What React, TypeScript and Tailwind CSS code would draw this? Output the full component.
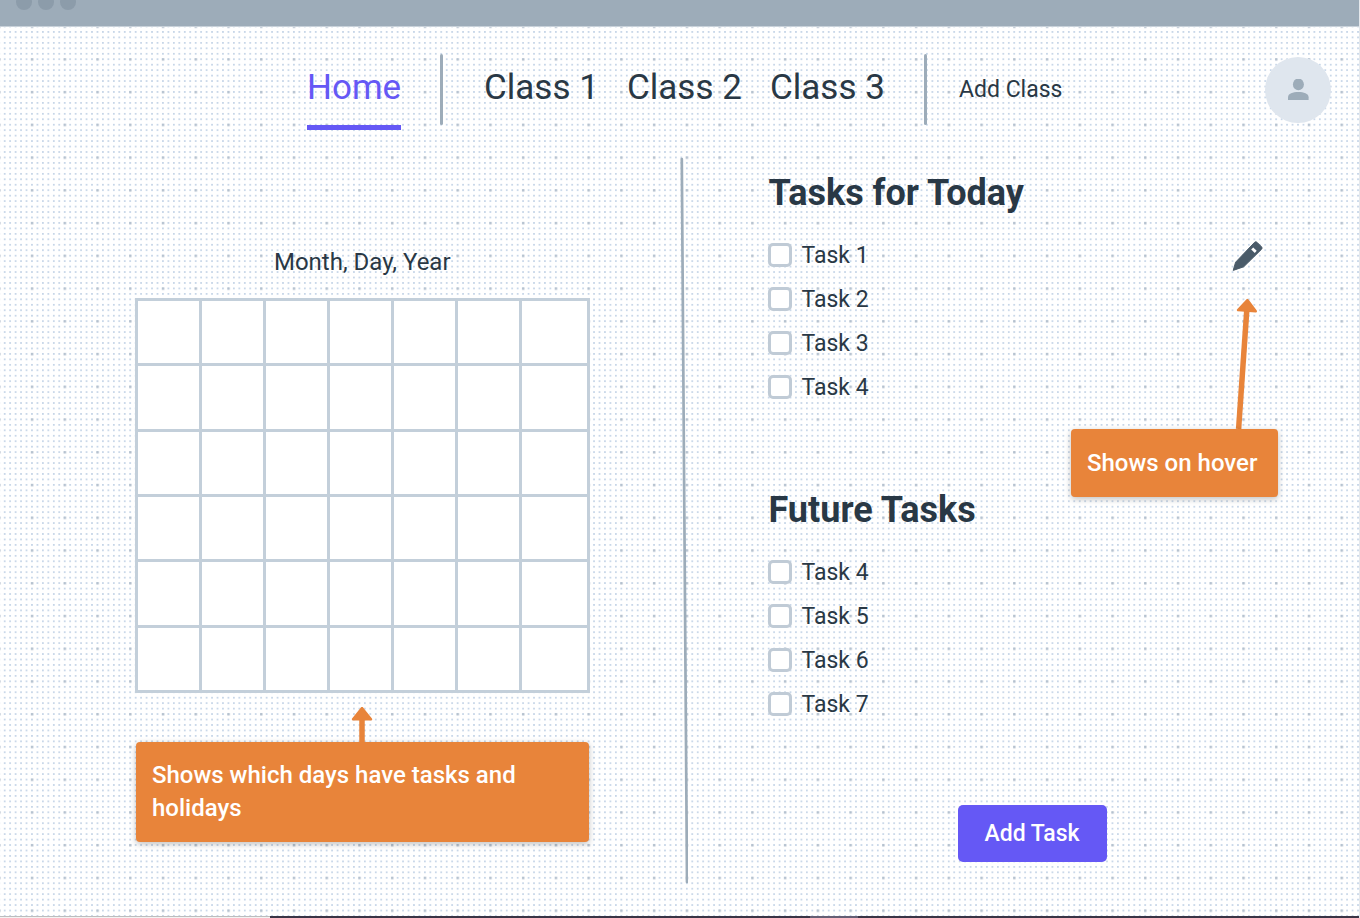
import React from "react";

const WEEKS = [0, 1, 2, 3, 4, 5];
const DAYS = [0, 1, 2, 3, 4, 5, 6];

function DottedBackdrop() {
  return (
    <svg className="absolute inset-0 -z-10 h-full w-full" aria-hidden="true">
      <defs>
        <pattern id="small-dots" x="1.98" y="1.95" width="5.457" height="5.457" patternUnits="userSpaceOnUse">
          <rect x="1.9" y="1.9" width="1.6" height="1.6" fill="#bacde3" />
        </pattern>
        <pattern id="large-dots" x="15.9" y="10.5" width="32.742" height="32.742" patternUnits="userSpaceOnUse">
          <rect x="15" y="15" width="2.4" height="2.4" fill="#b4c0cd" />
        </pattern>
      </defs>
      <rect width="100%" height="100%" fill="url(#small-dots)" />
      <rect width="100%" height="100%" fill="url(#large-dots)" />
    </svg>
  );
}

function ClassLink({ name }: { name: string }) {
  return (
    <a href="#class" className="w-28 text-[35px] leading-10 whitespace-nowrap">
      {name}
    </a>
  );
}

function TaskGroup({ title, tasks }: { title: string; tasks: string[] }) {
  return (
    <section>
      <h2 className="pl-px text-4xl leading-10 font-bold whitespace-nowrap">{title}</h2>
      <ul className="mt-[30px] flex flex-col gap-5">
        {tasks.map((task) => (
          <li key={task}>
            <label className="flex h-6 items-center gap-[10px] text-[23px] leading-6">
              <input
                type="checkbox"
                className="h-6 w-6 appearance-none rounded-[5px] border-3 border-[#c0cbd6] bg-white checked:bg-[#6558f5]"
              />
              <span className="pt-[2px]">{task}</span>
            </label>
          </li>
        ))}
      </ul>
    </section>
  );
}

export default function App() {
  return (
    <div className="relative isolate flex min-h-screen flex-col overflow-hidden border-r border-[#e4e8ec] bg-white font-['Roboto',sans-serif] text-[#293845]">
      <DottedBackdrop />

      <div className="flex h-[26px] items-start gap-[6px] bg-[#9dacb9] pl-4 shadow-[0_1px_0_#c9d2da]">
        <span className="-mt-[6px] h-4 w-4 rounded-full bg-[#8c9caa]" />
        <span className="-mt-[6px] h-4 w-4 rounded-full bg-[#8c9caa]" />
        <span className="-mt-[6px] h-4 w-4 rounded-full bg-[#8c9caa]" />
      </div>

      <header className="flex items-start pt-7 pr-7 pl-[307px]">
        <nav className="flex items-start">
          <a
            href="#home"
            className="w-[94px] border-b-5 border-[#6558f5] pt-[14px] pb-[17px] text-center text-[35px] leading-10 text-[#6558f5]"
          >
            Home
          </a>
          <span className="ml-[39px] h-[71px] w-[3px] rounded-full bg-[#9dacb9]" />
          <div className="ml-[41px] flex gap-[31px] pt-[14px]">
            <ClassLink name="Class 1" />
            <ClassLink name="Class 2" />
            <ClassLink name="Class 3" />
          </div>
          <span className="ml-[42px] h-[71px] w-[3px] rounded-full bg-[#9dacb9]" />
          <button type="button" className="ml-8 pt-4 text-[23px] leading-10 whitespace-nowrap">
            Add Class
          </button>
        </nav>
        <button
          type="button"
          aria-label="Account"
          className="mt-[3px] ml-auto flex h-[66px] w-[66px] items-center justify-center rounded-full bg-[#dfe6ee]"
        >
          <svg width="22" height="22" viewBox="0 0 22 22" fill="#9dacb9" aria-hidden="true">
            <ellipse cx="11.4" cy="5.4" rx="5.5" ry="5.9" />
            <path d="M1 21v-2.7c0-3.9 4.9-5.3 10.3-5.3s10.3 1.4 10.3 5.3V21z" />
          </svg>
        </button>
      </header>

      <main className="mt-[27px] flex flex-1">
        <section className="w-1/2 pt-[85px] pr-[90px] pl-[135px]">
          <h1 className="text-center text-2xl leading-10">Month, Day, Year</h1>
          <table className="mt-4 h-[395px] w-full table-fixed border-collapse bg-white" aria-label="Calendar">
            <tbody>
              {WEEKS.map((week) => (
                <tr key={week}>
                  {DAYS.map((day) => (
                    <td key={day} className="w-16 border-3 border-[#c3cfda] last:w-auto" />
                  ))}
                </tr>
              ))}
            </tbody>
          </table>
          <svg className="mx-auto mt-[14px] block" width="22" height="35" viewBox="0 0 22 35" aria-hidden="true">
            <path d="M11 6v29" stroke="#e8843a" strokeWidth="5.5" />
            <path d="M11 1 20 12.2H2z" fill="#e8843a" stroke="#e8843a" strokeWidth="2.4" strokeLinejoin="round" />
          </svg>
          <p className="mx-px rounded-[4px] bg-[#e8843a] px-4 py-[17px] text-2xl leading-[33px] font-medium text-white shadow-[0_2px_6px_rgba(0,0,0,0.25)]">
            Shows which days have tasks and holidays
          </p>
        </section>

        <svg className="h-[727px] w-2 shrink-0" viewBox="0 0 8 727" preserveAspectRatio="none" aria-hidden="true">
          <path d="M1.8 2 7 725" stroke="#9dacb9" strokeWidth="2.7" strokeLinecap="round" />
        </svg>

        <section className="flex-1 pt-4 pr-[81px] pl-20">
          <div className="flex justify-between">
            <div className="flex flex-col gap-[91px]">
              <TaskGroup title="Tasks for Today" tasks={["Task 1", "Task 2", "Task 3", "Task 4"]} />
              <TaskGroup title="Future Tasks" tasks={["Task 4", "Task 5", "Task 6", "Task 7"]} />
            </div>
            <div className="flex w-[207px] flex-col items-end pt-[67px]">
              <button type="button" aria-label="Edit task" className="mr-[15px]">
                <svg className="block" width="31" height="31" viewBox="0 0 31 31" aria-hidden="true">
                  <path
                    d="M1.2 30.4 3.6 22.2 22.6 2.3Q23.8 1.1 25 2.3L29.6 6.9Q30.6 8 29.6 9.2L11.7 26.8z"
                    fill="#4a5b69"
                    stroke="#4a5b69"
                    strokeWidth="1"
                    strokeLinejoin="round"
                  />
                  <path d="M19.2 9.6 21.2 7.5 24.7 10.7 22.8 12.9z" fill="#fff" />
                </svg>
              </button>
              <svg className="mt-[26px] mr-5 block" width="24" height="132" viewBox="0 0 24 132" aria-hidden="true">
                <path d="M13 10 4.6 132" stroke="#e8843a" strokeWidth="5.5" />
                <path d="M13.4 3 21.8 14.2 4 13z" fill="#e8843a" stroke="#e8843a" strokeWidth="2.4" strokeLinejoin="round" />
              </svg>
              <p className="w-full rounded-[4px] bg-[#e8843a] px-4 py-[17px] text-2xl leading-[34px] font-medium whitespace-nowrap text-white shadow-[0_2px_6px_rgba(0,0,0,0.25)]">
                Shows on hover
              </p>
            </div>
          </div>
          <button
            type="button"
            className="mt-[89px] ml-[190px] h-[57px] w-[149px] rounded-[5px] bg-[#6558f5] pt-[2px] text-[23px] font-medium text-white"
          >
            Add Task
          </button>
        </section>
      </main>

      <div className="flex h-[2px] bg-[#3a3546]">
        <span className="w-[270px] border-t border-[#bdbdbd] bg-[#f3f3f3]" />
        <span className="ml-[540px] w-12 bg-[#655f74]" />
      </div>
    </div>
  );
}
